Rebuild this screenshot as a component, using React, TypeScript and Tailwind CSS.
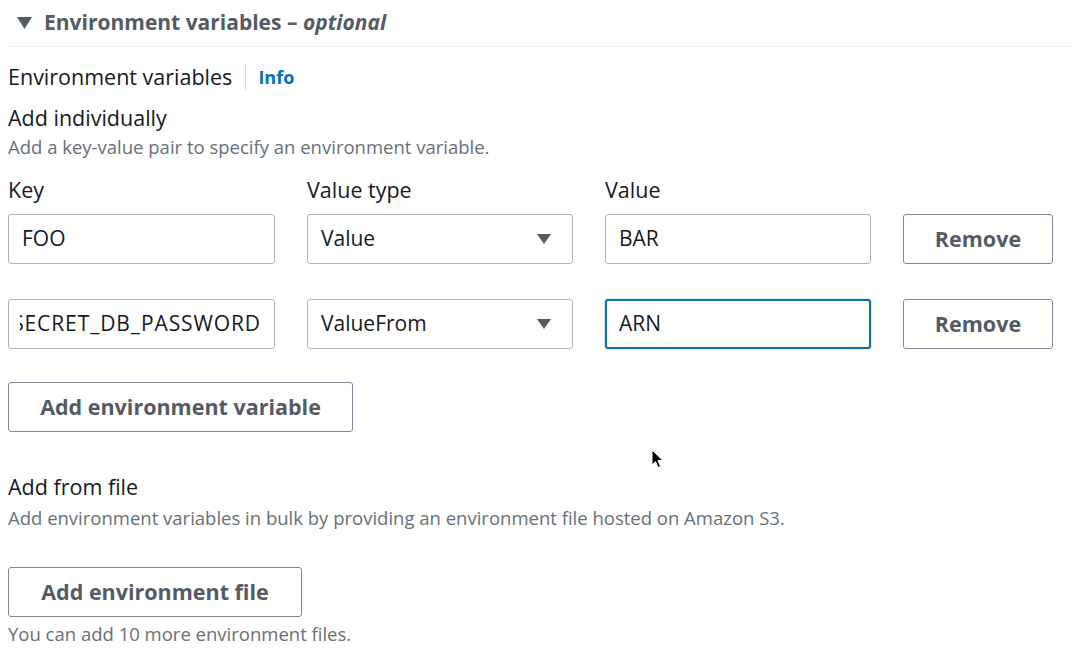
import { useState } from "react";

const font = { fontFamily: '"Open Sans", "Noto Sans", sans-serif' };

interface EnvRow {
  key: string;
  type: string;
  value: string;
  focused?: boolean;
  clipped?: boolean;
}

const rows: EnvRow[] = [
  { key: "FOO", type: "Value", value: "BAR" },
  { key: "SECRET_DB_PASSWORD", type: "ValueFrom", value: "ARN", focused: true, clipped: true }
];

const Caret = () => (
  <svg width="16" height="12" viewBox="0 0 16 12" className="shrink-0">
    <path d="M1 1 H15 L8 11 Z" fill="#545b64" />
  </svg>
);

const TextBox = ({ text, focused, clipped }: { text: string; focused?: boolean; clipped?: boolean }) => (
  <div
    className={
      "h-[50px] rounded-[3px] bg-white flex items-center text-[21px] text-[#16191f] " +
      (focused
        ? "border-2 border-[#0a6fb0] shadow-[0_0_0_1px_#d7ebf7] px-[12px]"
        : "border border-[#aab7b8] " + (clipped ? "pl-[11px] pr-[13px]" : "px-[13px]"))
    }
  >
    <div className={"flex-1 min-w-0 overflow-hidden whitespace-nowrap flex " + (clipped ? "justify-end" : "")}>
      <span className={"shrink-0 " + (clipped ? "tracking-[0.9px]" : "")}>{text}</span>
    </div>
  </div>
);

const SelectBox = ({ text }: { text: string }) => (
  <div className="h-[50px] rounded-[3px] border border-[#aab7b8] bg-white flex items-center justify-between pl-[13px] pr-[20px] text-[21px] text-[#16191f]">
    <span>{text}</span>
    <Caret />
  </div>
);

const OutlineButton = ({ label, className }: { label: string; className: string }) => (
  <button
    className={
      "h-[50px] rounded-[3px] border border-[#7d8998] bg-white text-[21.5px] font-bold text-[#545b64] " +
      className
    }
  >
    {label}
  </button>
);

export default function App() {
  const [open] = useState(true);

  return (
    <div className="w-[1073px] h-[658px] bg-white relative overflow-hidden" style={font}>
      <div className="pl-[8px] pt-[6px]">
        <div className="flex items-center gap-[12px] pl-[9px] h-[34px] text-[21px] font-bold text-[#545b64]">
          {open && (
            <svg width="15" height="12" viewBox="0 0 15 12">
              <path d="M0 0 H15 L7.5 12 Z" fill="#545b64" />
            </svg>
          )}
          <span>
            Environment variables – <em className="italic">optional</em>
          </span>
        </div>
        <div className="h-px bg-[#eaeded] mt-[6px]" />

        <div className="flex items-center mt-[16px] h-[28px]">
          <span className="text-[21.5px] text-[#16191f]">Environment variables</span>
          <span className="w-px h-[26px] bg-[#d5dbdb] ml-[13px] mr-[12px]" />
          <span className="text-[18px] font-bold text-[#0073bb]">Info</span>
        </div>

        <div className="mt-[13px] text-[21.5px] text-[#16191f] leading-[28px]">Add individually</div>
        <div className="mt-[2px] text-[18.5px] text-[#687078] leading-[26px]">
          Add a key-value pair to specify an environment variable.
        </div>

        <div className="flex gap-[32px] mt-[16px] text-[21.5px] text-[#16191f] leading-[28px]">
          <span className="w-[267px]">Key</span>
          <span className="w-[266px]">Value type</span>
          <span className="w-[266px]">Value</span>
        </div>

        <div className="flex flex-col gap-[35px] mt-[10px]">
          {rows.map((r) => (
            <div key={r.key} className="flex gap-[32px]">
              <div className="w-[267px]">
                <TextBox text={r.key} clipped={r.clipped} />
              </div>
              <div className="w-[266px]">
                <SelectBox text={r.type} />
              </div>
              <div className="w-[266px]">
                <TextBox text={r.value} focused={r.focused} />
              </div>
              <OutlineButton label="Remove" className="w-[150px]" />
            </div>
          ))}
        </div>

        <OutlineButton label="Add environment variable" className="w-[345px] mt-[33px]" />

        <div className="mt-[41px] text-[21.5px] text-[#16191f] leading-[28px]">Add from file</div>
        <div className="mt-[4px] text-[18.5px] text-[#687078] leading-[26px]">
          Add environment variables in bulk by providing an environment file hosted on Amazon S3.
        </div>

        <OutlineButton label="Add environment file" className="w-[294px] mt-[36px]" />
        <div className="mt-[5px] text-[18.5px] text-[#687078] leading-[24px]">
          You can add 10 more environment files.
        </div>
      </div>

      <svg width="14" height="22" viewBox="0 0 14 22" className="absolute left-[651px] top-[449px]">
        <path d="M1 1 L1 16 L4.5 12.5 L7 18.5 L9.5 17.5 L7 11.5 L12 11.5 Z" fill="#000" stroke="#fff" strokeWidth="1" />
      </svg>
    </div>
  );
}
